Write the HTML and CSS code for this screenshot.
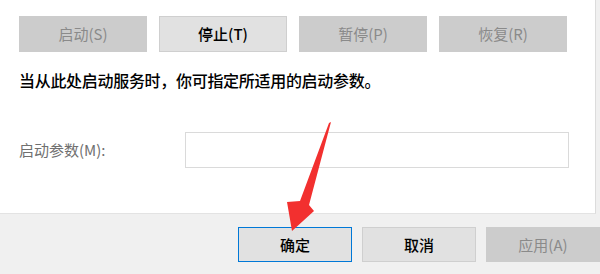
FILE: index.html
```html
<!DOCTYPE html>
<html lang="zh-CN">
<head>
<meta charset="utf-8">
<link rel="stylesheet" href="styles.css">
</head>
<body>
<div class="dialog">
  <div class="panel">
    <div class="btn-row">
      <button class="btn disabled">启动(S)</button>
      <button class="btn normal">停止(T)</button>
      <button class="btn disabled">暂停(P)</button>
      <button class="btn disabled">恢复(R)</button>
    </div>
    <p class="hint">当从此处启动服务时，你可指定所适用的启动参数。</p>
    <div class="param-row">
      <span class="param-label">启动参数(M):</span>
      <div class="param-input"></div>
    </div>
  </div>
  <div class="footer">
    <button class="fbtn default">确定</button>
    <button class="fbtn normal">取消</button>
    <button class="fbtn disabled">应用(A)</button>
  </div>
  <svg class="arrow" width="600" height="274" viewBox="0 0 600 274">
    <polygon points="331,122 309,205 314,211 292,231 287,202 300,201 329,123" fill="#f2302f"/>
  </svg>
</div>
</body>
</html>
```
FILE: styles.css
```css
html, body {
  margin: 0;
  padding: 0;
}
body {
  width: 600px;
  height: 274px;
  overflow: hidden;
  background: #f0f0f0;
  font-family: "Noto Sans CJK SC", "Microsoft YaHei", sans-serif;
}
.dialog {
  position: relative;
  width: 600px;
  height: 274px;
}
.panel {
  width: 596px;
  height: 214px;
  box-sizing: border-box;
  background: #ffffff;
  border-right: 1px solid #dcdcdc;
  border-bottom: 1px solid #e3e3e3;
  padding: 16px 0 0 19px;
}
.btn-row {
  display: flex;
  gap: 12px;
}
.btn, .fbtn {
  box-sizing: border-box;
  font-family: inherit;
  font-size: 15px;
  line-height: 20px;
  padding: 0;
  margin: 0;
  border: 1px solid #adadad;
  background: #e1e1e1;
  color: #000;
  font-weight: 500;
}
.btn {
  width: 128px;
  height: 36px;
}
.disabled {
  background: #cccccc;
  border-color: #cccccc;
  color: #8a8a8a;
}
.btn.disabled, .fbtn.disabled {
  font-weight: 400;
}
.normal {
  background: #e1e1e1;
  border-color: #cfcfcf;
  color: #000;
}
.hint {
  margin: 18px 0 0 0;
  font-size: 16px;
  line-height: 20px;
  font-weight: 500;
  color: #000;
  letter-spacing: -0.3px;
}
.param-row {
  display: flex;
  align-items: center;
  margin-top: 42px;
}
.param-label {
  width: 166px;
  font-size: 15px;
  line-height: 20px;
  color: #707070;
}
.param-input {
  width: 384px;
  height: 36px;
  box-sizing: border-box;
  border: 1px solid #dadada;
  background: #fff;
}
.footer {
  display: flex;
  justify-content: flex-end;
  gap: 10px;
  padding-top: 13px;
}
.fbtn {
  width: 114px;
  height: 35px;
}
.fbtn.default {
  border: 1px solid #0078d7;
  background: #e1e1e1;
  color: #000;
}
.arrow {
  position: absolute;
  left: 0;
  top: 0;
  pointer-events: none;
}
```
